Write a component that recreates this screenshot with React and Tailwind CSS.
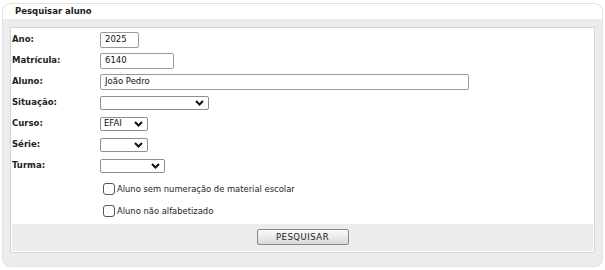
import React from "react";

const Chevron = () => (
  <svg width="9" height="6" viewBox="0 0 9 6" className="shrink-0">
    <path d="M1 1 L4.5 4.5 L8 1" fill="none" stroke="#111" strokeWidth="2" />
  </svg>
);

function Select({ w, value }) {
  return (
    <div
      className="flex h-[14px] items-center justify-between rounded-[2px] border border-[#8f8f8f] bg-white pl-[3px] pr-[4px] text-[8.5px] text-[#111]"
      style={{ width: w }}
    >
      <span>{value}</span>
      <Chevron />
    </div>
  );
}

function Input({ w, value }) {
  return (
    <div
      className="flex h-[16px] items-center rounded-[2px] border border-[#9a9a9a] bg-white px-[4px] text-[8.5px] text-[#111]"
      style={{ width: w }}
    >
      {value}
    </div>
  );
}

function Row({ label, children }) {
  return (
    <div className="flex h-[21px] items-center">
      <div className="w-[88px] text-[8.5px] font-bold text-[#222]">{label}</div>
      {children}
    </div>
  );
}

function Check({ label }) {
  return (
    <div className="flex h-[22px] items-center pl-[91px]">
      <div className="h-[12px] w-[12px] rounded-[3px] border border-[#555] bg-white" />
      <span className="ml-[2px] text-[8.4px] text-[#222]">{label}</span>
    </div>
  );
}

export default function App() {
  return (
    <div
      className="h-[270px] w-[605px] bg-white pl-[2px] pt-[3px]"
      style={{ fontFamily: '"DejaVu Sans", Verdana, sans-serif' }}
    >
      <div className="flex h-[264px] w-[601px] flex-col rounded-[8px] border border-[#e2e2e2] bg-[#ececec]">
        <div className="flex h-[15px] items-center rounded-t-[8px] bg-white pl-[12px] text-[8.5px] font-bold text-[#222]">
          Pesquisar aluno
        </div>
        <div className="mx-[7px] mt-[8px] flex h-[226px] flex-col border border-[#d6d6d6] bg-white p-[1px]">
          <div className="flex flex-col">
            <Row label="Ano:">
              <Input w={39} value="2025" />
            </Row>
            <Row label="Matrícula:">
              <Input w={74} value="6140" />
            </Row>
            <Row label="Aluno:">
              <Input w={369} value="João Pedro" />
            </Row>
            <Row label="Situação:">
              <Select w={109} value="" />
            </Row>
            <Row label="Curso:">
              <Select w={48} value="EFAI" />
            </Row>
            <Row label="Série:">
              <Select w={48} value="" />
            </Row>
            <Row label="Turma:">
              <Select w={65} value="" />
            </Row>
            <div className="h-[2px]" />
            <Check label="Aluno sem numeração de material escolar" />
            <Check label="Aluno não alfabetizado" />
          </div>
          <div className="mt-[2px] flex flex-1 justify-center bg-[#ececec] pt-[5px]">
            <button className="h-[16px] w-[92px] rounded-[2px] border border-[#8a8a8a] bg-gradient-to-b from-[#fbfbfb] to-[#d9d9d9] text-[8.5px] tracking-[0.5px] text-[#222] shadow-[inset_0_1px_0_#fff]">
              PESQUISAR
            </button>
          </div>
        </div>
      </div>
    </div>
  );
}
